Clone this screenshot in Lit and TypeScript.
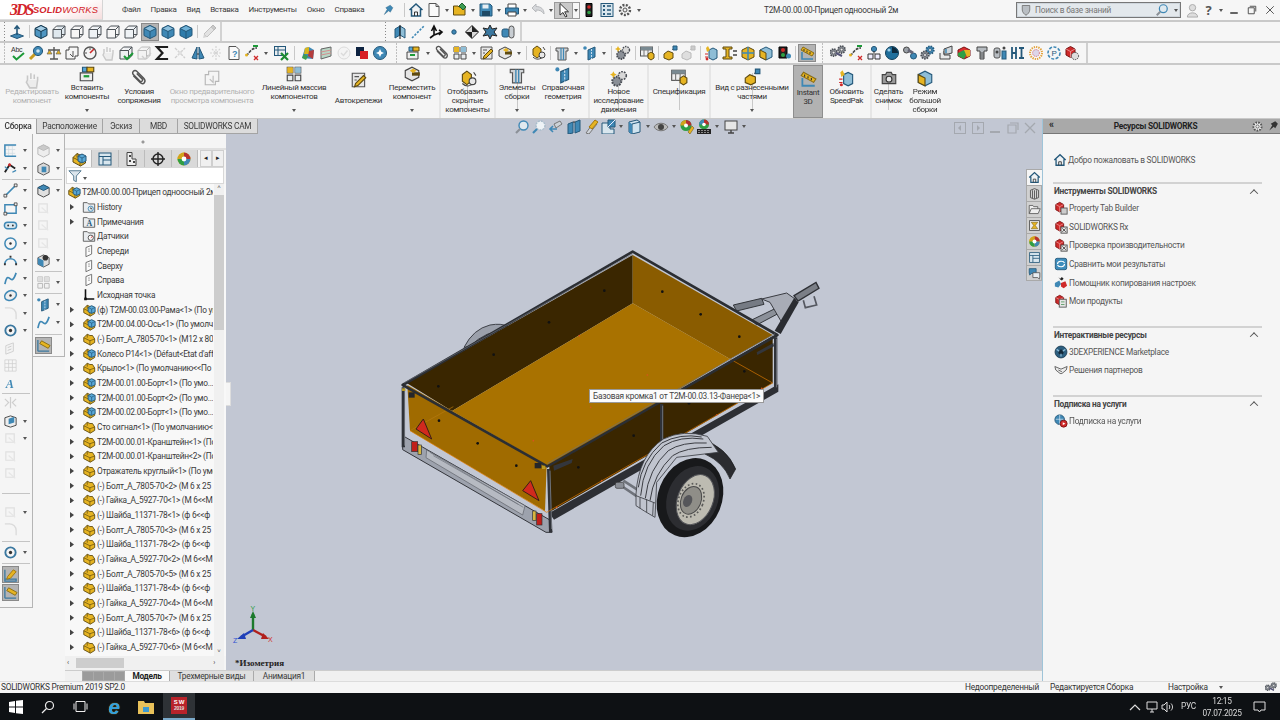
import { LitElement, html, css, svg } from 'lit';
import { customElement } from 'lit/decorators.js';

const B = '#3f88b5', BD = '#24587a', Y = '#e6b422', YD = '#5e4a10', G = '#8b9097', GD = '#4a4e55', R = '#cf2a2a';

const cube = (f = B, t = '#8cc0de', s = BD) => svg`<path d="M8 1.5 14 4.5V11.5L8 14.5 2 11.5V4.5Z" fill=${f} stroke=${s}/><path d="M2 4.5 8 1.5 14 4.5 8 7.5Z" fill=${t} stroke=${s}/><path d="M8 7.5V14.5" stroke=${s}/>`;
const wire = (f = 'none') => svg`<path d="M2 5.5H10.5V14H2ZM5.5 2H14V10.5H10.5M2 5.5 5.5 2M10.5 5.5 14 2M10.5 14 14 10.5" fill=${f} stroke="#4d5358"/>`;
const part = svg`<path d="M2 6.5 6 2.5 9 4 12 4 14.5 8V12L9.5 15 2 11Z" fill=${Y} stroke=${YD}/><path d="M2 6.5 9 10V15M9 10 14.5 8M6 2.5 6 6.5" fill="none" stroke=${YD} stroke-width=".8"/>`;
const asm = svg`${part}<path d="M7 5 11 3 15 5V10L11 12 7 10Z" fill="#58a7d6" stroke=${BD}/><path d="M7 5 11 7 15 5M11 7V12" fill="none" stroke=${BD} stroke-width=".8"/>`;
const folder = (x: unknown = '') => svg`<path d="M1.5 3H6L7.5 4.5H14.5V14H1.5Z" fill="#e9ecef" stroke="#555"/>${x}`;
const plane = svg`<path d="M4.5 4 11 1.5V11.5L4.5 14.5Z" fill="#fbfbfb" stroke="#666"/><path d="M8 5V9" stroke="#666" stroke-dasharray="1.5 1"/>`;
const page = svg`<path d="M3 1.5H10L13 4.5V14.5H3Z" fill="#fafafa" stroke="#555"/>`;
const gear = (c = G, s = GD) => svg`<circle cx="8" cy="8" r="5" fill=${c} stroke=${s} stroke-width="2.4" stroke-dasharray="2 1.4"/><circle cx="8" cy="8" r="2" fill="#eee" stroke=${s}/>`;
const redbox = svg`<path d="M2 4 6.5 1.5 11 4V10L6.5 12.5 2 10Z" fill=${R} stroke="#7a1212"/><path d="M2 4 6.5 6.5 11 4M6.5 6.5V12.5" fill="none" stroke="#f2b5b5" stroke-width=".7"/>`;

const ICONS: Record<string, unknown> = {
  normal: svg`<path d="M1.5 12 8 9.5 14.5 12 8 14.5Z" fill=${B} stroke=${BD}/><path d="M8 11V2M5.5 5 8 2 10.5 5" fill="none" stroke=${BD} stroke-width="1.6"/>`,
  cube: cube(), cubeE: cube('#4f96c2', '#a4cde5', '#14384f'), cube2: cube('#2f7cab', '#6fb2d8', BD),
  wire1: wire('#dfe8ee'), wire2: wire(), wire3: wire('#eef2f5'),
  flash: svg`<path d="M3 10 10 3 13 6 6 13Z" fill="#bcc0c4" stroke="#5d6166"/><path d="M10 3 12 1 15 4 13 6" fill="#777" stroke="#444"/><path d="M3 10 2 14 6 13" fill="#999"/>`,
  planeB: svg`<path d="M3 5 8 2V11L3 14Z" fill=${B} stroke=${BD}/><path d="M8 2 13 5V14L8 11Z" fill="#8ebdd6" stroke=${BD}/><path d="M8 1V15" stroke="#111"/>`,
  axis: svg`<path d="M2 14 14 2" stroke=${B} stroke-width="1.6" stroke-dasharray="2.2 1.4"/>`,
  triad: svg`<path d="M6 2V11L14 8M6 11 2 14M3.5 7 6 2 8.5 7M11 6l3 2-3 3" fill="none" stroke="#111" stroke-width="1.6"/>`,
  dot: svg`<circle cx="8" cy="8" r="2.2" fill=${B} stroke=${BD}/>`,
  diamond: svg`<path d="M8 1.5 14.5 8 8 14.5 1.5 8Z" fill="#d9d9d9" stroke="#222"/><path d="M8 1.5V8H1.5L8 14.5V8H14.5Z" fill="#222"/>`,
  spark: svg`<path d="M8 1 10 5 15 4 12 8 15 12 10 11 8 15 6 11 1 12 4 8 1 4 6 5Z" fill="#3b78a0" stroke="#222"/>`,
  cyls: svg`<rect x="2" y="5" width="7" height="8" rx="2" fill=${B} stroke=${BD}/><rect x="9" y="2" width="5" height="12" rx="2.5" fill="#c8cdd2" stroke="#555"/>`,
  abc: svg`<text x="1" y="7" font-size="7" font-family="Liberation Sans" fill="#333">Abc</text><path d="M3 11 6.5 14.5 14 8" fill="none" stroke="#1d9a38" stroke-width="2"/>`,
  probe: svg`<path d="M2 14 7 9" stroke="#c89b20" stroke-width="3"/><circle cx="10" cy="6" r="4.6" fill=${B} stroke=${BD}/><circle cx="10" cy="6" r="1.8" fill="#cfe4f0"/>`,
  scale: svg`<path d="M8 2V14M4 14H12M2 5H14" stroke="#555" stroke-width="1.4"/><path d="M1 9H6L3.5 5ZM10 9H15L12.5 5Z" fill=${Y} stroke="#555" stroke-width=".6"/>`,
  docs: svg`<path d="M5 2H14V11H11V14H2V5H5Z" fill="#f5f5f5" stroke="#444"/><path d="M6 9 9 12V6" stroke="#555" fill="none"/>`,
  gauge: svg`<circle cx="8" cy="8" r="6" fill="#f3f3f3" stroke="#555" stroke-width="1.4"/><path d="M8 8 12 4" stroke=${R} stroke-width="1.6"/><path d="M3 8H5M8 3V5" stroke="#555"/>`,
  hand: svg`<path d="M4 8V4M7 7V2M10 7V3M13 8V5M4 8 3 10 6 15H12L13 8" fill="#ddd" stroke="#777" stroke-width="1.4"/>`,
  shieldok: svg`${wire('#eef0f2')}<path d="M6 11 9 14 15 8" fill="none" stroke="#1d9a38" stroke-width="2"/>`,
  shield: svg`${wire('#eef0f2')}<path d="M6 11 9 14 15 8" fill="none" stroke="#888" stroke-width="1.4"/>`,
  sigma: svg`<path d="M13 3V2H3L8.5 8 3 14H13V13" fill="none" stroke="#1e1e1e" stroke-width="2.2"/>`,
  dims: svg`<path d="M3 3 13 13M3 13 13 3" stroke="#888" stroke-width="1.4" stroke-dasharray="3 1"/><circle cx="8" cy="8" r="2" fill="#bbb"/>`,
  book: svg`<path d="M2 13 7 2V14ZM9 2 14 13 9 14Z" fill=${B} stroke=${BD}/><path d="M7 9H9" stroke="#333"/>`,
  freeze: svg`<path d="M8 1V15M2 8H14M4 4 12 12M12 4 4 12" stroke="#999" stroke-width="1.2" stroke-dasharray="2 1"/>`,
  docq: svg`${page}<text x="6" y="12" font-size="9" font-weight="700" font-family="Liberation Sans" fill=${B}>?</text>`,
  curve: svg`<path d="M2 10C5 10 6 3 13 3" fill="none" stroke="#444" stroke-width="1.6" stroke-dasharray="3 1"/><circle cx="2.5" cy="10" r="1.5" fill=${Y}/><path d="M10 11 14 15M14 11 10 15" stroke=${R} stroke-width="1.3"/><path d="M9 1 14 1" stroke="#1d9a38" stroke-width="2"/>`,
  tablex: svg`<rect x="1.5" y="1.5" width="11" height="9" fill="#e9edf0" stroke="#24587a"/><path d="M1.5 5H12.5M5 1.5V10.5" stroke="#24587a"/><path d="M8 8 15 15M15 8 8 15" stroke="#1d8a32" stroke-width="2.2"/>`,
  color: svg`<path d="M2 13 5 3 9 2 14 5 13 14Z" fill=${B}/><path d="M5 3 9 2 9 9 4 9Z" fill="#d7b51e"/><path d="M9 6 14 5 13 14 8 11Z" fill="#b33b3b"/><path d="M2 13 4 9 8 11 6 15Z" fill="#3e9c50"/>`,
  layers: svg`<path d="M3 4 13 2V11L3 14Z" fill="#b8d5c4" stroke="#666"/><path d="M3 7 13 5M3 10 13 8" stroke="#d38f8f"/>`,
  check: svg`<circle cx="8" cy="8" r="6" fill="#f1f1f1" stroke="#aaa"/><path d="M5 8 7.5 10.5 11.5 5.5" fill="none" stroke="#aaa" stroke-width="1.4"/>`,
  redsq: svg`<rect x="2" y="2" width="8" height="9" fill="#0d2240"/><rect x="6" y="6" width="8" height="8" fill="#d81f26"/>`,
  sprock: svg`<circle cx="8" cy="8" r="6.5" fill=${B} stroke=${BD}/><path d="M8 4 9.3 6.7 12 8 9.3 9.3 8 12 6.7 9.3 4 8 6.7 6.7Z" fill="#fff"/>`,
  insert: svg`<path d="M2 7H13V14H2Z" fill="#eee" stroke="#444"/><path d="M4 6V2H8V6Z" fill="#58a7d6" stroke=${BD}/><path d="M8 6V2H14V6Z" fill=${Y} stroke=${YD}/><path d="M5 10H10" stroke="#1d9a38" stroke-width="2"/>`,
  clip: svg`<path d="M3 6 9 12C12 15 15 11 12 8L6 2C4 0 1 3 3 5L9 11C10 12 12 10 11 9L6 4" fill="none" stroke="#555" stroke-width="1.3"/>`,
  pattern: svg`<path d="M2 2H7V7H2ZM9 2H14V7H9ZM2 9H7V14H2ZM9 9H14V14H9Z" fill="#e9edf0" stroke="#444"/><path d="M2 2H7V7H2Z" fill=${Y}/><path d="M9 2H14V7H9Z" fill="#8ebdd6"/>`,
  fast: svg`<path d="M2 2H13V14H2Z" fill="#e6e6e6" stroke="#555"/><path d="M5 11 12 4 14 6 7 13 4 14Z" fill=${Y} stroke=${YD}/><path d="M4 5H8M4 8H6" stroke="#555"/>`,
  move: svg`<path d="M2 5 8 2 14 5V11L8 14 2 11Z" fill="#e5e5e5" stroke="#444"/><path d="M8 8H15" stroke=${YD} stroke-width="3"/><path d="M6 5 9 3 12 5 9 7Z" fill=${Y}/>`,
  show: svg`<path d="M3 4 7 1 11 4V10L7 13 3 10Z" fill=${Y} stroke=${YD}/><path d="M3 12C6 15 10 15 14 11" fill="none" stroke="#444"/><circle cx="12" cy="10" r="3" fill="#e8e8e8" stroke="#444"/><path d="M13 2 15 5" stroke="#444"/>`,
  elem: svg`<path d="M2 3H14V6H12V15H4V6H2Z" fill="#cfd3d6" stroke="#555"/><path d="M7 3V15M9.5 3V15" stroke=${B} stroke-width="1.2"/>`,
  geom: svg`<path d="M6 5 13 2V12L6 15Z" fill=${B} stroke=${BD}/><path d="M9.5 4V14" stroke="#cde" stroke-dasharray="2 1"/><circle cx="3" cy="3" r="1.8" fill=${B}/>`,
  motion: svg`<circle cx="6" cy="10" r="4" fill=${G} stroke=${GD} stroke-width="1.8" stroke-dasharray="1.5 1"/><circle cx="11" cy="5" r="3.5" fill="#d8d8d8" stroke=${GD} stroke-width="1.4" stroke-dasharray="1.5 1"/><path d="M3 1 4 3 6 4 4 5 3 7 2 5 0 4 2 3Z" fill=${Y}/>`,
  bom: svg`<rect x="1.5" y="2" width="12" height="9" fill="#f0f0f0" stroke="#555"/><path d="M1.5 5H13.5M5 5V11M9 5V11" stroke="#777"/><rect x="1.5" y="2" width="12" height="3" fill="#7a8a92"/><path d="M9 9 12 7 15 9V13L12 15 9 13Z" fill=${Y} stroke=${YD}/>`,
  expl: svg`<path d="M2 9 6 6 11 8V13L7 15 2 13Z" fill=${Y} stroke=${YD}/><path d="M10 5 12 3" stroke="#444" stroke-dasharray="1 1"/><path d="M11 1H15V5H11Z" fill=${B} stroke=${BD}/>`,
  load: svg`<path d="M5 5 9 3 13 5V13L9 15 5 13Z" fill="#8ebdd6" stroke=${BD}/><path d="M2 3 4 1 6 5 3 7Z" fill=${Y}/><path d="M1 9H4M1 12H4" stroke=${R}/><circle cx="3" cy="14" r="1.4" fill=${R}/>`,
  ibeam: svg`<path d="M1 2H10V4H7V12H10V14H1V12H4V4H1Z" fill=${Y} stroke=${YD}/><path d="M11 6H15M11 10H15" stroke="#444" stroke-width="1.4"/>`,
  ycube: svg`<path d="M2 5 8 2 14 5V12L8 15 2 12Z" fill=${Y} stroke=${YD}/><path d="M8 2V15M2 8 14 8" stroke=${B} stroke-width="1.5"/>`,
  ybcube: svg`<path d="M2 5 8 2 14 5V12L8 15 2 12Z" fill="#8ebdd6" stroke=${BD}/><path d="M2 5 8 8V15L2 12Z" fill=${Y} stroke=${YD}/>`,
  light: svg`<path d="M5 1.5H11V14.5H5Z" fill="#222" stroke="#000"/><circle cx="8" cy="5" r="1.8" fill=${R}/><circle cx="8" cy="10.5" r="1.8" fill="#2fa145"/>`,
  lightB: svg`<path d="M3 2H11V13H3Z" fill="#222" stroke="#000"/><circle cx="7" cy="5" r="2" fill=${R}/><circle cx="7" cy="10" r="2" fill="#2fa145"/><circle cx="12.5" cy="11" r="2.5" fill=${B}/>`,
  inst: svg`<path d="M2 5 4 2 15 8 13 11Z" fill=${Y} stroke="#8a6d14"/><path d="M5 4 5 6M8 5.5 8 7.5M11 7 11 9" stroke="#333"/><path d="M3 7V14H14" fill="none" stroke=${B} stroke-width="1.6"/>`,
  gears2: svg`<g transform="translate(-2 2) scale(.7)">${gear()}</g><g transform="translate(6 -1) scale(.7)">${gear()}</g><path d="M6 8 12 11" stroke="#557" stroke-width="2"/>`,
  nodes: svg`<circle cx="8" cy="4" r="2.6" fill=${B} stroke=${BD}/><path d="M2 9H7V14H2ZM9 9H14V14H9Z" fill="#eef" stroke="#333"/><path d="M8 6V9" stroke="#333"/>`,
  ball: svg`<circle cx="8" cy="8" r="6.5" fill="#1f6f9c" stroke="#123f5a"/><path d="M8 2A6 6 0 0 1 14 8H8Z" fill="#0c2a3e"/><circle cx="5" cy="5" r="1.6" fill="#9fd0ea"/>`,
  rollers: svg`<circle cx="4.5" cy="5" r="3" fill="#9aa0a6" stroke="#444"/><circle cx="11.5" cy="11" r="3" fill=${B} stroke=${BD}/><path d="M6 5 11 8" stroke="#667" stroke-width="3"/>`,
  gearB: svg`<g transform="translate(4 -1) scale(.75)">${gear(B, BD)}</g><g transform="translate(-1 4) scale(.75)">${gear()}</g>`,
  pipe: svg`<path d="M2 8V14H12V10H6V6" fill="#e9e9e9" stroke="#444"/><path d="M6 4 14 1V8L10 9H6Z" fill="#cfd6db" stroke="#444"/><path d="M8 4V8" stroke=${B} stroke-width="1.5"/>`,
  redcube: svg`<path d="M2 5 8 2 14 5V11L8 14 2 11Z" fill="#db2e2e" stroke="#7a1212"/><path d="M2 8 8 5 11 8 8 14 2 11Z" fill="#2f9e44"/><path d="M8 5 14 5V11L11 12Z" fill=${Y}/>`,
  screw: svg`<path d="M3 2H13V6H10V14H6V6H3Z" fill="#b7bcc1" stroke="#444"/><path d="M6 8H10M6 10H10M6 12H10" stroke="#555"/>`,
  bolts: svg`<rect x="2" y="3" width="6" height="10" rx="2" fill="#b7bcc1" stroke="#555"/><circle cx="5" cy="7" r="1.5" fill="#444"/><rect x="10" y="6" width="4" height="8" fill=${B} stroke=${BD}/><circle cx="12" cy="3" r="1.5" fill="#444"/>`,
  kit: svg`<path d="M2 2V14M2 8H6M6 2V14M9 3H14M9 13H14M11.5 3V13" fill="none" stroke="#24587a" stroke-width="1.8"/>`,
  rings: svg`<circle cx="8" cy="8" r="6" fill="none" stroke="#e4a33c" stroke-width="2" stroke-dasharray="1.3 1"/><circle cx="8" cy="8" r="3.4" fill="#dcd6ea" stroke="#c33" stroke-width=".7" stroke-dasharray="1 1"/>`,
  pcirc: svg`<circle cx="8" cy="8" r="6" fill="none" stroke=${B} stroke-width="1.6" stroke-dasharray="3 1.5"/><text x="5.4" y="11" font-size="8" font-family="Liberation Sans" fill=${BD}>P</text>`,
  redgear: svg`${redbox}<circle cx="11" cy="11" r="3.6" fill="#ddd" stroke="#444" stroke-dasharray="1.3 .8"/>`,
  home: svg`<path d="M1.5 8 8 2 14.5 8M3.5 7V14H12.5V7" fill="#eef2f5" stroke=${BD} stroke-width="1.5"/><path d="M6.5 14V10H9.5V14" fill="none" stroke="#333"/>`,
  newdoc: svg`${page}<path d="M10 1.5V4.5H13" fill="none" stroke="#555"/>`,
  open: svg`<path d="M1.5 4H6L7 5H13V13H1.5Z" fill=${Y} stroke=${YD}/><path d="M7 4 10 1 14 5 11 8Z" fill="#3c9b52" stroke="#1e5e2e"/>`,
  save: svg`<path d="M2 2H12L14 4V14H2Z" fill=${B} stroke=${BD}/><rect x="4.5" y="2.5" width="6" height="4" fill="#e6eef3"/><rect x="4" y="9" width="8" height="5" fill="#1f4a66"/>`,
  print: svg`<path d="M4 6V2H12V6" fill="#fff" stroke="#444"/><path d="M1.5 6H14.5V12H1.5Z" fill=${B} stroke=${BD}/><path d="M4 10H12V14H4Z" fill="#fff" stroke="#444"/>`,
  undo: svg`<path d="M2 6 6 2V4.5C11 4.5 14 7 14 12 12 9 10 8 6 8V10Z" fill="#d6d8db" stroke="#b8babd"/>`,
  arrow: svg`<path d="M4 1.5V13L7 10.5 9.5 15 11 14.2 8.7 9.8H12.5Z" fill="#fff" stroke="#333"/>`,
  listico: svg`<rect x="2" y="1.5" width="12" height="13" fill="#d8e6ee" stroke=${BD}/><path d="M8 4H12M8 8H12M8 12H12" stroke=${BD} stroke-width="1.4"/><path d="M4 3H6V5H4ZM4 7H6V9H4ZM4 11H6V13H4Z" fill=${BD}/>`,
  cog: gear('#f2f2f2', '#555'),
  pin: svg`<path d="M5 5 11 1.5 14.5 5 11 11 9 9 3 14 7 7Z" fill=${B} stroke=${BD} stroke-width=".5"/>`,
  pinB: svg`<path d="M5 5 11 1.5 14.5 5 11 11 9 9 3 14 7 7Z" fill="#333"/>`,
  // sketch strip
  skrect: svg`<path d="M2 14V3H13M6 3V14M10 3V14M2 7H13M2 11H13" fill="none" stroke="#cfdbe2" stroke-width=".8"/><path d="M2 14V2H14M2 14H14" fill="none" stroke=${B} stroke-width="1.6"/>`,
  smart: svg`<path d="M2 12 7 4 13 8" fill="none" stroke="#222" stroke-width="2"/><path d="M2 6 5 9M10 12 14 10" stroke=${B} stroke-width="1.4"/><circle cx="7" cy="4" r="1.6" fill=${R}/>`,
  skline: svg`<path d="M2 14 14 2" stroke=${B} stroke-width="1.6"/><path d="M1 12H4V15H1ZM12 1H15V4H12Z" fill="#eee" stroke="#333" stroke-width=".8"/>`,
  sksq: svg`<path d="M2 4H14V13H2Z" fill="none" stroke=${B} stroke-width="1.6"/><path d="M1 12H4V15H1ZM12 2H15V5H12Z" fill="#eee" stroke="#333" stroke-width=".8"/>`,
  skslot: svg`<rect x="1.5" y="4.5" width="13" height="7" rx="3.5" fill="#d8e6ee" stroke=${B} stroke-width="1.6"/><circle cx="5.5" cy="8" r="1" fill="#333"/><circle cx="10.5" cy="8" r="1" fill="#333"/>`,
  skcirc: svg`<circle cx="8" cy="8" r="6" fill="#f6f6f6" stroke=${B} stroke-width="1.6"/><circle cx="8" cy="8" r="1.3" fill="#333"/>`,
  skarc: svg`<path d="M2 12C2 4 14 4 14 12" fill="none" stroke=${B} stroke-width="1.6"/><path d="M1 11H3V13H1ZM13 11H15V13H13ZM7 3H9V5H7Z" fill="#333"/>`,
  skspl: svg`<path d="M2 14C6 -4 8 20 14 2" fill="none" stroke=${B} stroke-width="1.8"/>`,
  skell: svg`<ellipse cx="8" cy="8" rx="6.5" ry="5" transform="rotate(-25 8 8)" fill="#eee" stroke=${B} stroke-width="1.6"/><circle cx="8" cy="8" r="1.3" fill="#333"/>`,
  skfil: svg`<path d="M2 2H7C11 2 14 5 14 9V14" fill="none" stroke="#aaa" stroke-width="1.4"/>`,
  sktar: svg`<circle cx="8" cy="8" r="5.5" fill="none" stroke="#3b78a0" stroke-width="2"/><circle cx="8" cy="8" r="1.8" fill="#333"/>`,
  skpl: svg`<path d="M3 5 11 2V11L3 14Z" fill="#f2f2f2" stroke="#888"/><path d="M5 7 9 5.5M5 10 9 8.5" stroke=${B}/>`,
  skgrid: svg`<path d="M2 2H14V14H2ZM6 2V14M10 2V14M2 6H14M2 10H14" fill="#fafafa" stroke="#888" stroke-width=".8"/>`,
  skA: svg`<text x="3" y="13" font-size="13" font-style="italic" font-weight="700" font-family="Liberation Serif" fill=${B}>A</text>`,
  sktr: svg`<path d="M2 3 6 7 2 11M14 3 10 7 14 11M8 1V13" fill="none" stroke="#888" stroke-width="1.3"/>`,
  skcube: svg`<path d="M2 4 8 2 14 4V12L8 14 2 12Z" fill="#eee" stroke="#444"/><path d="M6 5 12 3V9L6 11Z" fill=${B}/>`,
  skoff: svg`<path d="M3 3H12V12H3Z" fill="none" stroke="#bbb" stroke-width="1.3"/><path d="M6 7 13 13" stroke="#ccc" stroke-width="1.4"/>`,
  skfast: svg`<path d="M2 13H14V15H2ZM2 3V13" fill="none" stroke="#3b78a0" stroke-width="1.4"/><path d="M5 10 11 3 14 5 8 12 4 13Z" fill=${Y} stroke="#a3760f"/>`,
  skins: svg`<path d="M2 14V2M2 14H14" fill="none" stroke="#3b78a0" stroke-width="1.4"/><path d="M4 6 6 3 15 8 13 11Z" fill=${Y} stroke="#8a6d14"/>`,
  gcube: svg`<path d="M2 5 8 2 14 5V12L8 15 2 12Z" fill="#ddd" stroke="#555"/><circle cx="10" cy="5" r="3" fill="#333"/><path d="M2 5 8 8V15L2 12Z" fill=${B}/>`,
  cubeL: svg`<path d="M2 5 8 2 14 5V12L8 15 2 12Z" fill="#d9d9d9" stroke="#555"/><path d="M6 6H11V12H6Z" fill=${B}/>`,
  cubeB: svg`<path d="M2 5 8 2 14 5V12L8 15 2 12Z" fill="#e0e0e0" stroke="#444"/><path d="M2 5 8 2 14 5 8 8Z" fill=${B} stroke=${BD}/>`,
  // tree
  part, asm,
  hist: folder(svg`<circle cx="10" cy="10" r="3" fill="#dfe9ef" stroke=${B}/><path d="M10 8.5V10H11.5" stroke="#333" fill="none"/>`),
  notes: folder(svg`<text x="5" y="13" font-size="9" font-weight="700" font-family="Liberation Serif" fill=${BD}>A</text>`),
  sens: folder(svg`<circle cx="10" cy="10" r="3" fill="#fff" stroke="#444"/><path d="M10 10 12 8.5" stroke=${R}/>`),
  plane,
  origin: svg`<path d="M4 1.5V12.5H14" fill="none" stroke="#111" stroke-width="1.8"/><path d="M2.5 11H5.5V14H2.5Z" fill="#111"/>`,
  filter: svg`<path d="M1 2H15L9.5 8V14.5L6.5 13V8Z" fill="#dbe5ec" stroke="#466e88"/>`,
  shieldS: svg`<path d="M3 2H13V8C13 11 10 14 8 15 6 14 3 11 3 8Z" fill="#b9bec3" stroke="#666"/>`,
  fm2: svg`<rect x="2" y="2" width="12" height="12" fill="#d8e6ee" stroke=${BD}/><path d="M2 5.5H14M6 5.5V14M6 9H14" stroke=${BD}/>`,
  fm3: svg`<path d="M4 1.5H9V8H13V14.5H4Z" fill="#eee" stroke="#444"/><path d="M6 4H8V6H6ZM6 9H8V11H6ZM10 10H12V12H10Z" fill="#444"/>`,
  fm4: svg`<circle cx="8" cy="8" r="5" fill="none" stroke="#222" stroke-width="1.4"/><path d="M8 1V15M1 8H15" stroke="#222" stroke-width="1.4"/>`,
  wheel: svg`<circle cx="8" cy="8" r="6.5" fill="#e2be22"/><path d="M8 8V1.5A6.5 6.5 0 0 1 14.5 8Z" fill="#b5302f"/><path d="M8 8H1.5A6.5 6.5 0 0 1 8 1.5Z" fill="#d2a31c"/><path d="M8 8V14.5A6.5 6.5 0 0 1 1.5 8Z" fill="#2f9e44"/><path d="M8 8H14.5A6.5 6.5 0 0 1 8 14.5Z" fill=${B}/><circle cx="8" cy="8" r="2.4" fill="#fff"/>`,
  wheelP: svg`<circle cx="7" cy="6.5" r="5.5" fill="#2f9e44"/><path d="M7 6.5V1A5.5 5.5 0 0 1 12.5 6.5Z" fill="#b5302f"/><path d="M7 6.5H1.5A5.5 5.5 0 0 1 7 1Z" fill="#d2a31c"/><circle cx="7" cy="6.5" r="2" fill="#fff"/><path d="M9 13 13 7 15 9 11 15Z" fill=${Y} stroke=${YD} stroke-width=".5"/>`,
  wheelF: svg`<circle cx="8" cy="5.5" r="5" fill="#2f9e44"/><path d="M8 5.5V.5A5 5 0 0 1 13 5.5Z" fill="#b5302f"/><path d="M8 5.5H3A5 5 0 0 1 8 .5Z" fill=${B}/><circle cx="8" cy="5.5" r="1.8" fill="#fff"/><path d="M1 10H15V15H1Z" fill="#222"/><path d="M3 11V14M6 11V14M9 11V14M12 11V14" stroke="#eee" stroke-dasharray="1 1"/>`,
  search: svg`<circle cx="9.5" cy="6.5" r="4.5" fill="#dfe9ef" stroke=${B} stroke-width="1.4"/><path d="M6 10 2 14" stroke=${G} stroke-width="2.2"/>`,
  zoomA: svg`<circle cx="9.5" cy="6.5" r="4.5" fill="#eef3f6" stroke="#a9bccb" stroke-width="1.4" stroke-dasharray="2 1"/><path d="M6 10 2 14" stroke=${B} stroke-width="2.2"/>`,
  prevV: svg`<path d="M6 5 12 2 14 5 8 9Z" fill="#ccd2d8" stroke="#777"/><path d="M2 10H9M5 7 2 10 5 13" fill="none" stroke=${B} stroke-width="1.6"/>`,
  sect: svg`<path d="M2 5 7 3V14L2 15ZM9 3 14 1V12L9 14Z" fill=${B} stroke=${BD}/><path d="M7 3 9 3" stroke="#333"/>`,
  dyn: svg`<path d="M3 14 11 3 14 5 6 15Z" fill="#d0d4da" stroke="#777"/><path d="M6 8 12 1 15 3 9 10Z" fill=${Y} stroke="#a3760f"/>`,
  viewO: svg`<path d="M2 4H10V10H14V15H2Z" fill="#d8e6ee" stroke=${BD}/><path d="M8 1H15V8H8Z" fill=${B} stroke=${BD}/><path d="M8 8 15 1" stroke="#eef"/>`,
  cubeV: svg`<path d="M3 3 11 1 14 3V13L6 15 3 13Z" fill="#cfe3ef" stroke=${BD}/><path d="M6 5V15M6 5 14 3" stroke=${BD}/><path d="M3 3 6 5V15L3 13Z" fill=${B}/>`,
  eye: svg`<path d="M1 8C4 3 12 3 15 8 12 13 4 13 1 8Z" fill="#bbb" stroke="#777"/><circle cx="8" cy="8" r="3" fill="#444"/>`,
  monitor: svg`<rect x="2" y="2" width="12" height="9" fill="#e6e6e6" stroke="#444"/><path d="M8 11V14M5 14H11" stroke="#444" stroke-width="1.4"/>`,
  mini1: svg`<rect x="2.5" y="2.5" width="11" height="11" fill="none" stroke="#a4a8af"/><path d="M9 5 6 8 9 11Z" fill="#a4a8af"/>`,
  mini2: svg`<rect x="2.5" y="2.5" width="11" height="11" fill="none" stroke="#a4a8af"/><path d="M7 5 10 8 7 11Z" fill="#a4a8af"/>`,
  minim: svg`<path d="M3 12H13" stroke="#a4a8af" stroke-width="2"/>`,
  rest: svg`<path d="M5 3H13V10M3 5H11V13H3Z" fill="none" stroke="#a4a8af" stroke-width="1.2"/>`,
  close: svg`<path d="M3 3 13 13M13 3 3 13" stroke="#a4a8af" stroke-width="1.3"/>`,
  minD: svg`<path d="M3 12H13" stroke="#333" stroke-width="2"/>`,
  restD: svg`<path d="M5 3H13V10M3 5H11V13H3Z" fill="none" stroke="#444" stroke-width="1.2"/>`,
  closeD: svg`<path d="M3 3 13 13M13 3 3 13" stroke="#555" stroke-width="1.3"/>`,
  user: svg`<circle cx="8" cy="5" r="3.4" fill="#ddd" stroke="#aaa"/><path d="M2.5 15C2.5 9 13.5 9 13.5 15Z" fill="#ddd" stroke="#aaa"/>`,
  tabBox: svg`<path d="M3 4 8 2 13 4V13L8 15 3 13Z" fill="#d4d4d4" stroke="#444"/><path d="M5.5 4V13.5M8 4V14.5M10.5 4V13.5" stroke="#444"/>`,
  tabOpen: svg`<path d="M1.5 13V3H6L7 4.5H12V7M1.5 13 4 7H15L12.5 13Z" fill="#eee" stroke="#555"/>`,
  tabPic: svg`<rect x="2" y="2" width="12" height="12" fill="#eee" stroke="#444"/><path d="M4 4H12L9 8 12 12H4L7 8Z" fill=${Y} stroke=${YD} stroke-width=".6"/>`,
  tabChat: svg`<path d="M1.5 2H10V8H4L2 10V8H1.5Z" fill=${B} stroke=${BD}/><path d="M6 7H14.5V13H14V15L12 13H6Z" fill="#e8eef2" stroke="#555"/>`,
  camera: svg`<path d="M2 5H5L6 3H10L11 5H14V13H2Z" fill="#9a9a9a" stroke="#444"/><circle cx="8" cy="9" r="2.6" fill="#e9e9e9" stroke="#333"/>`,
  resProp: svg`${redbox}<rect x="8" y="8" width="7" height="7" fill="#ccc" stroke="#555"/>`,
  resRx: svg`${redbox}<rect x="8" y="8" width="7" height="7" fill="#e5e5e5" stroke="#444"/><path d="M9.5 9.5 13.5 13.5M13.5 9.5 9.5 13.5" stroke="#444"/>`,
  resCmp: svg`<rect x="1.5" y="1.5" width="13" height="13" rx="2" fill="#3d8dbc" stroke=${BD}/><path d="M4 8C4 4 11 4 12 7M12 8C12 12 5 12 4 9" fill="none" stroke="#fff" stroke-width="1.3"/>`,
  resCopy: svg`<path d="M1 8 6 5 8 9 5 13 1 12Z" fill=${B}/><path d="M8 8 13 6 15 11 11 14 8 12Z" fill=${R}/><path d="M5 1 7 3 9 1 11 3 9 5 7 4Z" fill="#222"/>`,
  resProd: svg`${redbox}<rect x="6" y="6" width="8" height="9" fill="#e6e6e6" stroke="#555"/><path d="M8 9H12M8 12H12" stroke="#5a9a63"/>`,
  res3d: svg`<circle cx="8" cy="8" r="6.8" fill="#2d5f80" stroke="#1b3c52"/><circle cx="8" cy="8" r="3" fill="#13293a"/><path d="M3 5 6 7M13 5 10 7M8 13V10" stroke="#87b9d6" stroke-width="1.4"/>`,
  resHand: svg`<path d="M1 4 8 7 15 4 14 8 9 12 7 12 2 8Z" fill="#ececec" stroke="#555"/><path d="M5 8 9 10" stroke="#555"/>`,
  resSub: svg`<circle cx="6.5" cy="6.5" r="5.5" fill=${B} stroke=${BD}/><path d="M2 6H11M6.5 1V12" stroke="#d5e7f2" stroke-width=".8"/><circle cx="11" cy="11" r="4" fill=${R} stroke="#7a1212"/><path d="M10 9.5 13 11 10 12.5Z" fill="#fff"/>`,
};

const ic = (name: string, size = 16, cls = '') =>
  html`<svg class="ic ${cls}" width=${size} height=${size} viewBox="0 0 16 16">${ICONS[name]}</svg>`;

// toolbar strings: name, name! (disabled), name* (pressed), v dropdown, | separator, _n spacer, h grip
const bar = (s: string) =>
  s.trim().split(/\s+/).map((t) => {
    const m = t.match(/^([v|_h])(\d+)?$/);
    if (m) {
      const w = m[2] ? `width:${m[2]}px` : '';
      if (m[1] === 'v') return html`<i class="dd" style=${w}></i>`;
      if (m[1] === '|') return html`<i class="sep" style=${w}></i>`;
      if (m[1] === 'h') return html`<i class="grip" style=${w}></i>`;
      return html`<i class="sp" style=${w}></i>`;
    }
    const off = t.endsWith('!'), on = t.endsWith('*');
    const n = off || on ? t.slice(0, -1) : t;
    return html`<span class="cell ${on ? 'on' : ''}">${ic(n, 16, off ? 'off' : '')}</span>`;
  });

const MENU = ['Файл', 'Правка', 'Вид', 'Вставка', 'Инструменты', 'Окно', 'Справка'];

const RIBBON = [
  { w: 64, i: 'hand', cy: 80, y: 91, t: ['Редактировать', 'компонент'], off: 1 },
  { w: 46, i: 'insert', cy: 74, y: 87, t: ['Вставить', 'компоненты'], dd: 1 },
  { w: 58, i: 'clip', cy: 78, y: 91, t: ['Условия', 'сопряжения'] },
  { w: 88, i: 'docs', cy: 78, y: 91, t: ['Окно предварительного', 'просмотра компонента'], off: 1 },
  { w: 76, i: 'pattern', cy: 74, y: 87, t: ['Линейный массив', 'компонентов'], dd: 1 },
  { w: 53, i: 'fast', cy: 80, y: 100, t: ['Автокрепежи'] },
  { w: 54, i: 'move', cy: 74, y: 87, t: ['Переместить', 'компонент'], dd: 1 },
  { w: 55, i: 'show', cy: 79, y: 91, t: ['Отобразить', 'скрытые', 'компоненты'], sep: 1 },
  { w: 44, i: 'elem', cy: 75, y: 87, t: ['Элементы', 'сборки'], dd: 1, sep: 1 },
  { w: 50, i: 'geom', cy: 75, y: 87, t: ['Справочная', 'геометрия'], dd: 1 },
  { w: 59, i: 'motion', cy: 79, y: 91, t: ['Новое', 'исследование', 'движения'], sep: 1 },
  { w: 62, i: 'bom', cy: 77, y: 91, t: ['Спецификация'], sep: 1 },
  { w: 84, i: 'expl', cy: 77, y: 87, t: ['Вид с разнесенными', 'частями'], dd: 1, sep: 1 },
  { w: 30, i: 'inst', cy: 78, y: 91, t: ['Instant', '3D'], sel: 1 },
  { w: 47, i: 'load', cy: 78, y: 91, t: ['Обновить', 'SpeedPak'] },
  { w: 35, i: 'camera', cy: 78, y: 91, t: ['Сделать', 'снимок'], sep: 1 },
  { w: 40, i: 'ybcube', cy: 78, y: 91, t: ['Режим', 'большой', 'сборки'] },
];

const TABS = ['Сборка', 'Расположение', 'Эскиз', 'MBD', 'SOLIDWORKS CAM'];
const TAB_W = [37, 66, 37, 38, 80];

type StripItem = [string, number?];
const STRIP1: (StripItem | number)[] = [
  ['skrect', 1], ['smart', 1], 5, ['skline', 1], ['sksq', 1], ['skslot', 1], ['skcirc', 1], ['skarc', 1], ['skspl', 1], ['skell', 1], ['skfil!', 1],
  ['sktar', 1], ['skpl!'], ['skgrid!'], ['skA'], 3, ['sktr!'], ['skcube', 1], ['skoff!', 1], ['skoff!'], ['skoff!'], 21, ['skoff!', 1], ['skfil!'], 5, ['sktar', 1], 5, ['skfast*'], ['skins*'],
];
const STRIP2: (StripItem | number)[] = [
  ['cubeB!', 1], ['cubeL', 1], 5, ['cubeB', 1], ['skoff!'], ['skoff!'], ['skoff!'], ['gcube', 1], 4, ['pattern!', 1], 5, ['geom', 1], ['skspl', 1], 6, ['skins*'],
];

const TREE: [string, string, number][] = [
  ['asm', 'T2M-00.00.00-Прицеп одноосный 2м', 2],
  ['hist', 'History', 1], ['notes', 'Примечания', 1], ['sens', 'Датчики', 0], ['plane', 'Спереди', 0], ['plane', 'Сверху', 0], ['plane', 'Справа', 0], ['origin', 'Исходная точка', 0],
  ['asm', '(ф) T2M-00.03.00-Рама<1> (По умолчанию', 1], ['asm', 'T2M-00.04.00-Ось<1> (По умолчанию', 1], ['part', '(-) Болт_А_7805-70<1> (M12 x 80', 1],
  ['asm', "Колесо P14<1> (Défaut<Etat d'affichage", 1], ['part', 'Крыло<1> (По умолчанию<<По', 1],
  ['asm', 'T2M-00.01.00-Борт<1> (По умо...', 1], ['asm', 'T2M-00.01.00-Борт<2> (По умо...', 1], ['asm', 'T2M-00.02.00-Борт<1> (По умо...', 1],
  ['part', 'Сто сигнал<1> (По умолчанию<<', 1], ['part', 'T2M-00.00.01-Кранштейн<1> (По', 1], ['part', 'T2M-00.00.01-Кранштейн<2> (По', 1], ['part', 'Отражатель круглый<1> (По умолч', 1],
  ['part', '(-) Болт_А_7805-70<2> (M 6 x 25', 1], ['part', '(-) Гайка_А_5927-70<1> (M 6<<M', 1], ['part', '(-) Шайба_11371-78<1> (ф 6<<ф', 1],
  ['part', '(-) Болт_А_7805-70<3> (M 6 x 25', 1], ['part', '(-) Шайба_11371-78<2> (ф 6<<ф', 1], ['part', '(-) Гайка_А_5927-70<2> (M 6<<M', 1],
  ['part', '(-) Болт_А_7805-70<5> (M 6 x 25', 1], ['part', '(-) Шайба_11371-78<4> (ф 6<<ф', 1], ['part', '(-) Гайка_А_5927-70<4> (M 6<<M', 1],
  ['part', '(-) Болт_А_7805-70<7> (M 6 x 25', 1], ['part', '(-) Шайба_11371-78<6> (ф 6<<ф', 1], ['part', '(-) Гайка_А_5927-70<6> (M 6<<M', 1],
];

const SECTIONS = [
  { title: 'Инструменты SOLIDWORKS', gap: 0, items: [['resProp', 'Property Tab Builder'], ['resRx', 'SOLIDWORKS Rx'], ['resRx', 'Проверка производительности'], ['resCmp', 'Сравнить мои результаты'], ['resCopy', 'Помощник копирования настроек'], ['resProd', 'Мои продукты']] },
  { title: 'Интерактивные ресурсы', gap: 15, items: [['res3d', '3DEXPERIENCE Marketplace'], ['resHand', 'Решения партнеров']] },
  { title: 'Подписка на услуги', gap: 15, items: [['resSub', 'Подписка на услуги']] },
];

const BOLTS = [[643, 155], [477, 250], [311, 347], [145, 442], [817, 158], [932, 226], [1048, 293], [1063, 397], [897, 493], [731, 590], [565, 685], [147, 545], [263, 613], [379, 680]];
const ORANGE = [[568, 290], [772, 408], [602, 505], [430, 605], [500, 805], [635, 725], [808, 625], [980, 528], [1115, 448]];

// trailer drawn in 3x coordinates of the 440x310 model area
const trailer = html`<svg class="model" width="440" height="310" viewBox="0 0 1320 930">
  <path d="M222 325Q250 270 300 258 335 252 352 262L345 278Q290 272 240 322Z" fill="#9ba0ab" stroke="#3f4249" stroke-width="3"/>
  <path d="M1030 198 1115 178 1122 196 1040 216Z" fill="#767b84" stroke="#33363b" stroke-width="3"/>
  <path d="M1085 243 1190 192 1198 206 1100 258Z" fill="#8b9099" stroke="#33363b" stroke-width="3"/>
  <path d="M1115 180 1190 162 1218 182 1175 250 1140 190Z" fill="#a8acb6" stroke="#3a3c42" stroke-width="3"/>
  <path d="M1226 190 1172 285 1154 275 1212 178Z" fill="#2a2c31"/>
  <path d="M1212 170 1278 130 1287 148 1224 186Z" fill="#7b7f87" stroke="#2e3035" stroke-width="4"/>
  <path d="M1240 184 1246 206 1280 198 1272 172" fill="none" stroke="#555860" stroke-width="5"/>
  <path d="M38 590 478 842 486 880 468 880 38 632Z" fill="#9da2ad" stroke="#34363c" stroke-width="3"/>
  <path d="M110 633 405 800 398 828 108 656Z" fill="#b6bac2" stroke="#5c5f66" stroke-width="2"/>
  <path d="M130 650 385 796M120 640 400 805" stroke="#6b6f78" stroke-width="2"/>
  <path d="M478 822 1165 436 1165 458 1070 512 492 842Z" fill="#2d2f34"/>
  <path d="M700 725 770 770M690 738 760 785" stroke="#6f737b" stroke-width="8"/>
  <rect x="676" y="730" width="26" height="18" rx="5" fill="#8a8e96" stroke="#333" stroke-width="2"/>
  <path d="M728 48 50 432 186 516 728 193Z" fill="#3a2600"/>
  <path d="M728 48 1148 288 1020 360 728 193Z" fill="#8a5c00"/>
  <path d="M728 193 1020 360 478 684 186 516Z" fill="#a97200"/>
  <path d="M52 438 470 680 465 816 60 575Z" fill="#a06b00"/>
  <path d="M478 680 1148 292 1148 432 478 820Z" fill="#3a2600"/>
  <path d="M60 575 190 503" stroke="#b87a10" stroke-width="2"/>
  <path d="M1020 360 1148 432" stroke="#e07a00" stroke-width="2"/>
  <path d="M38 438 728 38 1162 288 472 682Z" fill="none" stroke="#2b2e33" stroke-width="8" stroke-linejoin="round"/>
  <path d="M42 432 728 45M472 674 1155 284" fill="none" stroke="#6b7079" stroke-width="2"/>
  <path d="M40 445V625M476 690 482 880M1157 295V448M815 495V625" stroke="#2f3238" stroke-width="10"/>
  <path d="M44 445V620M480 695 485 870M1160 300V445M818 500V620" stroke="#8e929a" stroke-width="2"/>
  <path d="M1100 340 1150 312 1152 322 1102 348ZM490 680 548 660 545 672 492 695Z" fill="#33363c"/>
  <rect x="36" y="448" width="10" height="8" fill="#b99a22"/><rect x="56" y="460" width="18" height="16" fill="#24262a"/>
  <rect x="434" y="672" width="20" height="16" fill="#24262a"/><rect x="456" y="680" width="10" height="10" fill="#b99a22"/>
  <path d="M100 540 78 570 125 600Z" fill="#d12a1e" stroke="#3a2015" stroke-width="3"/>
  <path d="M422 725 398 755 447 785Z" fill="#d12a1e" stroke="#3a2015" stroke-width="3"/>
  <rect x="65" y="608" width="18" height="30" fill="#c01f1a" stroke="#333" stroke-width="2"/><rect x="84" y="618" width="10" height="28" fill="#d6b640" stroke="#333" stroke-width="2"/>
  <rect x="428" y="816" width="10" height="28" fill="#d6b640" stroke="#333" stroke-width="2"/><rect x="440" y="824" width="16" height="34" fill="#c01f1a" stroke="#333" stroke-width="2"/>
  <path d="M60 575 470 820 1148 432" fill="none" stroke="#e07a00" stroke-width="2"/>
  ${BOLTS.map(([x, y]) => svg`<circle cx=${x} cy=${y} r="4" fill="#111"/>`)}
  ${ORANGE.map(([x, y]) => svg`<circle cx=${x} cy=${y} r="2.5" fill="#d9531e"/>`)}
  <path d="M935 600Q1010 625 1037 690L1020 720Q1000 670 945 645Z" fill="#2b2c30" stroke="#18191b" stroke-width="2"/>
  <path d="M738 765Q745 650 820 600 880 570 952 592L985 640 860 655 800 730 795 835Q760 815 738 800Z" fill="#c0c4ce" stroke="#3b3d43" stroke-width="2.5"/>
  <path d="M752 770Q760 672 822 620 870 590 940 600M766 778Q775 690 835 635 875 608 950 612M780 785Q790 705 848 650 885 625 965 625M745 745Q755 665 815 612 870 582 935 594" fill="none" stroke="#3b3d43" stroke-width="3"/>
  <path d="M750 775V808M770 780V820M790 790 788 830M738 770 795 792" stroke="#3b3d43" stroke-width="2.5" fill="none"/>
  <ellipse cx="900" cy="776" rx="96" ry="122" transform="rotate(22 900 776)" fill="#18191b"/>
  <ellipse cx="908" cy="778" rx="76" ry="100" transform="rotate(22 908 778)" fill="#2c2d31"/>
  <ellipse cx="916" cy="782" rx="53" ry="78" transform="rotate(22 916 782)" fill="#bdbbb1" stroke="#55565a" stroke-width="3"/>
  <ellipse cx="903" cy="784" rx="30" ry="43" transform="rotate(22 903 784)" fill="#8f8e88" stroke="#4a4a4a" stroke-width="3"/>
  <ellipse cx="903" cy="784" rx="37" ry="52" transform="rotate(22 903 784)" fill="none" stroke="#5a5a58" stroke-width="5" stroke-dasharray="5 7"/>
  <ellipse cx="893" cy="786" rx="13" ry="19" transform="rotate(22 893 786)" fill="#55565a"/>
</svg>`;

@customElement('app-root')
export class AppRoot extends LitElement {
  static override styles = css`
    :host { display: block; width: 1280px; height: 720px; overflow: hidden; font: 8.3px/1 Roboto, 'Open Sans', sans-serif; letter-spacing: -.25px; color: #3b3b3b; background: #f5f5f5; }
    * { box-sizing: border-box; }
    i { display: block; font-style: normal; flex: none; }
    .ic { display: block; flex: none; stroke-width: 1; }
    .ic.off { opacity: .35; filter: grayscale(1); }
    .app { display: flex; flex-direction: column; width: 1280px; height: 720px; filter: blur(.35px); }

    .cell { display: flex; align-items: center; justify-content: center; width: 18px; height: 18px; flex: none; }
    .cell.on { background: #b4b4b4; box-shadow: inset 0 0 0 1px #8a8a8a; }
    .dd { width: 10px; height: 100%; display: flex; align-items: center; justify-content: center; }
    .dd::after { content: ''; border: 2px solid transparent; border-top: 3px solid #555; border-bottom: 0; }
    .sep { width: 9px; height: 100%; background: linear-gradient(#c8c8c8, #c8c8c8) center / 1px 70% no-repeat; }
    .grip { width: 9px; height: 100%; background: radial-gradient(#888 .6px, transparent .9px) center / 3px 3px repeat-y; }
    .sp { width: 0; }

    .title { display: flex; align-items: center; height: 22px; flex: none; border-bottom: 2px solid #c9c9c9; background: #f6f6f6; position: relative; }
    .logo { display: flex; align-items: center; width: 103px; height: 20px; flex: none; padding-left: 10px; background: linear-gradient(160deg, #fff 55%, #f6dede); border-right: 1px solid #d5d5d5; border-bottom: 1px solid #ddd; color: #d3242b; }
    .logo .ds { font: italic 700 16px/1 'Liberation Serif', serif; letter-spacing: -2px; width: 23px; }
    .logo b { font: italic 700 9.4px/1 'Liberation Sans', sans-serif; letter-spacing: .1px; }
    .logo span { font: italic 400 9.4px/1 'Liberation Sans', sans-serif; letter-spacing: .1px; }
    .menu { display: flex; margin-left: 19px; width: 260px; gap: 10px; white-space: nowrap; font-size: 8px; letter-spacing: -.3px; }
    .title-tools { display: flex; align-items: center; height: 20px; margin-left: 7px; }
    .select { display: flex; height: 17px; border: 1px solid #9a9a9a; background: #c9c9c9; }
    .select .dd { background: #f6f6f6; width: 7px; border-left: 1px solid #9a9a9a; }
    .select .cell { height: 15px; width: 17px; }
    .doc { position: absolute; left: 764px; top: 6px; white-space: nowrap; }
    .search { display: flex; align-items: center; width: 165px; height: 16px; margin-left: auto; border: 1px solid #777; box-shadow: inset 0 0 0 1px #cfd6dc; background: #e3e8ec; padding: 0 0 0 3px; color: #777; gap: 3px; flex: none; }
    .search .q { flex: 1; }
    .win { display: flex; align-items: center; margin: 0 1px 0 4px; flex: none; }
    .win .help { width: 17px; font: 700 13px/1 'Open Sans', sans-serif; color: #555; text-align: center; }

    .tb { display: flex; flex: none; height: 21px; background: #f6f6f6; border-bottom: 2px solid #c9c9c9; }
    .tb .group { display: flex; align-items: center; height: 100%; }
    .r1 .g1 { width: 222px; border-right: 2px solid #d2d2d2; }
    .r1 .g2 { margin-left: 158px; width: 142px; border-right: 2px solid #d2d2d2; }
    .r2 { height: 22px; }
    .r2 .group { width: 1088px; border-right: 2px solid #cfcfcf; }

    .ribbon { display: flex; height: 54px; flex: none; background: #f5f5f5; border-bottom: 1px solid #c9c9c9; }
    .rib { display: flex; flex-direction: column; align-items: center; flex: none; font-size: 8px; letter-spacing: -.3px; line-height: 9px; text-align: center; color: #333; white-space: nowrap; }
    .rib.sep { border-left: 2px solid #e6e6e6; }
    .rib.off { color: #b2b2b2; }
    .rib.sel { background: #b2b2b2; border: 1px solid #8e8e8e; height: 53px; }
    .rib .dd { height: 4px; margin-top: auto; margin-bottom: 6px; }

    .work { display: flex; flex: 1; min-height: 0; }
    .center { flex: 1; display: flex; flex-direction: column; min-width: 0; background: #c2c7d3; }
    .tabsrow { display: flex; align-items: stretch; height: 15px; flex: none; }
    .tab { display: flex; align-items: center; justify-content: center; flex: none; height: 15px; background: #dcdcdc; border-right: 1px solid #a4a4a4; border-bottom: 1px solid #a4a4a4; white-space: nowrap; }
    .tab.on { background: #f5f5f5; border-bottom: 0; font-weight: 500; }
    .hud { display: flex; align-items: center; margin-left: 255px; }
    .hud .cell { width: 17.3px; }
    .hud .dd { width: 9px; }
    .vwin { display: flex; margin-left: 203px; }
    .vwin .cell { width: 17.6px; }

    .body { flex: 1; display: flex; min-height: 0; }
    .left { width: 65px; flex: none; display: flex; background: #f5f5f5; align-items: flex-start; }
    .strip { width: 33px; flex: none; border-right: 1px solid #b5b5b5; border-bottom: 1px solid #b5b5b5; padding-top: 8px; }
    .strip.s2 { width: 32px; height: 223px; }
    .strip.s1 { height: 474px; }
    .si { display: flex; align-items: center; height: 17.5px; padding-left: 3px; }
    .si .dd { height: 4px; margin-left: 4px; width: 6px; }
    .si.on .ic { background: #b4b4b4; outline: 1px solid #8a8a8a; }
    .hline { background: linear-gradient(#c4c4c4, #c4c4c4) center / 100% 1px no-repeat; margin: 0 2px; }
    .mid { flex: 1; display: flex; flex-direction: column; min-width: 0; }
    .midrow { flex: 1; display: flex; min-height: 0; }

    .fm { width: 161px; flex: none; display: flex; flex-direction: column; background: #f5f5f5; position: relative; }
    .fm-head { height: 16px; flex: none; background: radial-gradient(circle at 78px 8px, #999 1.3px, transparent 1.8px); border-bottom: 2px solid #e0e0e0; }
    .fmtabs { display: flex; height: 17px; flex: none; padding-left: 1px; }
    .fmtabs .t { width: 26.5px; display: flex; align-items: center; justify-content: center; background: #d9d9d9; border-right: 1px solid #bcbcbc; }
    .fmtabs .t.on { background: #f7f7f7; width: 26px; }
    .fmtabs .nav { width: 12px; display: flex; align-items: center; justify-content: center; background: #f0f0f0; border: 1px solid #cfcfcf; color: #222; font-size: 7px; }
    .fmtabs .nav.first { margin-left: 2px; }
    .filter { height: 17px; flex: none; margin: 0 2px 0 1px; background: #fff; border: 1px solid #d8d8d8; display: flex; align-items: center; padding-left: 1px; }
    .filter .dd { width: 6px; height: 6px; margin-top: 6px; }
    .tree { flex: 1; position: relative; min-height: 0; overflow: hidden; padding-top: 1px; background: #f8f8f8; }
    .row { display: flex; align-items: center; height: 14.68px; white-space: nowrap; width: 148px; overflow: hidden; }
    .row .ar { width: 4px; height: 6px; margin-left: 5px; margin-right: 8px; flex: none; }
    .row .ar.x { background: #444; clip-path: polygon(0 0, 100% 50%, 0 100%); }
    .row .ic { margin-right: 1px; }
    .row span { flex: 1; min-width: 0; overflow: hidden; line-height: 12px; }
    .row.root .ar { width: 0; margin: 0 0 0 2px; }
    .vs { position: absolute; top: 0; right: 2px; bottom: 0; width: 10px; background: #f0f0f0; display: flex; flex-direction: column; align-items: center; color: #444; font-size: 6px; }
    .vs .th { width: 100%; height: 135px; background: #cdcdcd; margin-top: 5px; }
    .vs .dn { margin-top: auto; margin-bottom: 2px; }
    .hs { height: 14px; flex: none; display: flex; align-items: center; background: #f0f0f0; margin-right: 2px; font-size: 7px; color: #444; padding: 0 9px 0 2px; justify-content: space-between; position: relative; }
    .hs .th { position: absolute; left: 11px; top: 2px; height: 10px; width: 48px; background: #cdcdcd; }

    .view { flex: 1; position: relative; min-width: 0; background: #c2c7d3; overflow: hidden; }
    .model { position: absolute; left: 164px; top: 105px; display: block; }
    .tip { position: absolute; left: 363px; top: 255px; height: 14px; padding: 0 3px; display: flex; align-items: center; background: #fbfbfb; border: 1px solid #999; white-space: nowrap; color: #444; }
    .triad { position: absolute; left: 6px; top: 472px; }
    .iso { position: absolute; left: 9px; top: 525px; font: 700 9px/1 'Liberation Serif', serif; letter-spacing: 0; color: #222; white-space: nowrap; }
    .grab { position: absolute; left: 0; top: 248px; width: 5px; height: 24px; background: #f5f5f5; border: 1px solid #ddd; border-left: 0; }
    .tpt { position: absolute; right: 0; top: 35px; width: 16px; display: flex; flex-direction: column; }
    .tpt span { height: 16px; display: flex; align-items: center; justify-content: center; background: #d0d0d0; border: 1px solid #a9a9a9; border-bottom-width: 0; }
    .tpt span.on { background: #f5f5f5; border-right-width: 0; }
    .tpt span:last-child { border-bottom-width: 1px; }

    .bottom { height: 11px; flex: none; display: flex; background: #f0f0f0; border-top: 1px solid #ccc; }
    .nav4 { margin-left: 17px; width: 43px; display: flex; background: #a9a9a9; gap: 1px; padding: 1px; }
    .nav4 i { flex: 1; background: #9b9b9b; }
    .btab { display: flex; align-items: center; justify-content: center; height: 11px; background: #dfdfdf; border-right: 1px solid #aaa; white-space: nowrap; flex: none; }
    .btab.on { background: #fafafa; font-weight: 700; color: #222; }

    .pane { width: 238px; flex: none; background: #f5f5f5; border-left: 1px solid #9fc4d8; display: flex; flex-direction: column; }
    .phead { height: 15px; flex: none; display: flex; align-items: center; background: #a9a9a9; border-bottom: 1px solid #777; color: #1f1f1f; position: relative; justify-content: center; font-weight: 700; padding-right: 12px; }
    .phead .l { position: absolute; left: 6px; font-size: 10px; line-height: 10px; top: 1px; }
    .phead .r { position: absolute; right: 0; top: 0; display: flex; }
    .pbody { flex: 1; padding: 18px 18px 0 10px; color: #555; }
    .welcome { display: flex; align-items: center; gap: 1px; height: 16px; margin-bottom: 14px; }
    .section { border-top: 2px solid #d2d2d2; }
    .shead { display: flex; justify-content: space-between; align-items: center; height: 15px; padding: 0 5px 0 1px; font-weight: 700; color: #444; }
    .chev { width: 6px; height: 6px; border-left: 1.4px solid #555; border-top: 1.4px solid #555; transform: rotate(45deg) translate(1px, 1px); }
    .ritem { display: flex; align-items: center; height: 18.6px; gap: 1px; margin-left: 1px; white-space: nowrap; }

    .status { height: 12px; flex: none; display: flex; align-items: center; background: #f5f5f5; border-top: 1px solid #dcdcdc; position: relative; color: #333; }
    .status .a { margin-left: 1px; flex: 1; }
    .status .c { white-space: nowrap; }
    .status .cell { height: 12px; }
    .status .dd { width: 8px; }
    .taskbar { height: 27px; flex: none; display: flex; align-items: center; background: #0e1114; color: #ddd; }
    .tk { width: 32px; height: 27px; display: flex; align-items: center; justify-content: center; flex: none; }
    .tk.ie-t { margin-left: 2px; }
    .tk.act { margin-left: 1px; background: #2e3236; border-bottom: 2px solid #7aa9c9; }
    .sw { width: 16px; height: 17px; background: #b8232a; color: #fff; font: 700 6px/1 'Liberation Sans', sans-serif; text-align: center; padding-top: 2px; }
    .sw small { display: block; font-size: 5px; color: #ddd; margin-top: 1px; }
    .ie { font: italic 700 21px/1 'Liberation Sans', sans-serif; color: #2f9fe0; text-shadow: 0 0 1px #e3b629; }
    .tray { margin-left: auto; display: flex; align-items: center; color: #dcdcdc; }
    .clock { text-align: center; line-height: 12px; width: 40px; margin: 0 11px 0 6px; }
    .rus { margin: 0 0 0 7px; }
  `;

  private strip(items: (StripItem | number)[]) {
    return items.map((it) => {
      if (typeof it === 'number') return html`<div class="hline" style="height:${it}px"></div>`;
      const raw = it[0];
      const off = raw.endsWith('!'), on = raw.endsWith('*');
      const name = off || on ? raw.slice(0, -1) : raw;
      return html`<div class="si ${on ? 'on' : ''}">${ic(name, 15, off ? 'off' : '')}${it[1] ? html`<i class="dd"></i>` : ''}</div>`;
    });
  }

  override render() {
    return html`<div class="app">
      <div class="title">
        <div class="logo"><span class="ds">3DS</span><b>SOLID</b><span>WORKS</span></div>
        <div class="menu">${MENU.map((m) => html`<span>${m}</span>`)}</div>
        ${ic('pin', 12)}
        <div class="title-tools">
          ${bar('|6 home newdoc v8 open v8 save v8 print v8 undo v7')}
          <div class="select"><span class="cell">${ic('arrow')}</span><i class="dd"></i></div>
          ${bar('light listico cog v')}
        </div>
        <div class="doc">T2M-00.00.00-Прицеп одноосный 2м</div>
        <div class="search">
          ${ic('shieldS', 12)}<span class="q">Поиск в базе знаний</span>${ic('search', 14)}<i class="dd" style="width:8px"></i>
        </div>
        <div class="win">
          ${ic('user', 15)}<span class="help">?</span><i class="dd" style="width:8px"></i><span class="cell">${ic('minD', 12)}</span><span class="cell">${ic('restD', 12)}</span><span class="cell">${ic('closeD', 12)}</span>
        </div>
      </div>

      <div class="tb r1">
        <div class="group g1">${bar('h8 normal |6 cubeE wire1 wire2 wire3 wire2 wire3 _1 cube* cube cube2 |5 flash!')}</div>
        <div class="group g2">${bar('h11 planeB axis triad dot diamond spark cyls')}</div>
      </div>
      <div class="tb r2">
        <div class="group">${bar(`h9 abc probe scale docs gauge hand! shieldok shield! sigma dims! book freeze! docq curve v _1 tablex |9 color layers check! redsq sprock h15 insert v11 clip pattern v9 fast move v |5 show |6 elem v geom v |5 motion |6 bom |5 expl expl! |6 load ibeam ycube ybcube lightB |5 inst* h13 gears2 curve nodes ball rollers gearB pipe redcube screw bolts kit rings pcirc redgear`)}</div>
      </div>

      <div class="ribbon">
        ${RIBBON.map((r) => html`<div class="rib ${r.sep ? 'sep' : ''} ${r.off ? 'off' : ''} ${r.sel ? 'sel' : ''}" style="width:${r.w}px">
          <div style="height:18px;margin-top:${r.cy - 74}px">${ic(r.i, 18, r.off ? 'off' : '')}</div>
          <div style="margin-top:${r.y - 4.5 - (r.cy + 9)}px">${r.t.map((l) => html`<div>${l}</div>`)}</div>
          ${r.dd ? html`<i class="dd"></i>` : ''}
        </div>`)}
      </div>

      <div class="work">
        <div class="center">
          <div class="tabsrow">
            ${TABS.map((t, i) => html`<div class="tab ${i === 0 ? 'on' : ''}" style="width:${TAB_W[i]}px">${t}</div>`)}
            <div class="hud">${bar('search zoomA prevV sect dyn viewO v cubeV v eye v wheelP wheelF v monitor v')}</div>
            <div class="vwin">${bar('mini1 mini2 minim rest close')}</div>
          </div>
          <div class="body">
            <div class="left">
              <div class="strip s1">${this.strip(STRIP1)}</div>
              <div class="strip s2">${this.strip(STRIP2)}</div>
            </div>
            <div class="mid">
              <div class="midrow">
                <div class="fm">
                  <div class="fm-head"></div>
                  <div class="fmtabs">
                    <span class="t on">${ic('asm')}</span><span class="t">${ic('fm2')}</span><span class="t">${ic('fm3')}</span><span class="t">${ic('fm4')}</span><span class="t">${ic('wheel')}</span>
                    <span class="nav first">◂</span><span class="nav">▸</span>
                  </div>
                  <div class="filter">${ic('filter', 14)}<i class="dd"></i></div>
                  <div class="tree">
                    ${TREE.map(([i, t, a]) => html`<div class="row ${a === 2 ? 'root' : ''}"><i class="ar ${a === 1 ? 'x' : ''}"></i>${ic(i, 14)}<span>${t}</span></div>`)}
                    <div class="vs"><span>˄</span><div class="th"></div><span class="dn">˅</span></div>
                  </div>
                  <div class="hs"><span>‹</span><div class="th"></div><span>›</span></div>
                </div>
                <div class="view">
                  ${trailer}
                  <div class="tip">Базовая кромка1 от T2M-00.03.13-Фанера&lt;1&gt;</div>
                  <svg class="triad" width="44" height="44" viewBox="0 0 44 44">
                    <path d="M21 24V8" stroke="#1c7a2c" stroke-width="2.4"/><path d="M18 12 21 5 24 12Z" fill="#1c7a2c"/>
                    <path d="M21 24 34 31" stroke="#b0201c" stroke-width="2.4"/><path d="M31 27 37 33 29 33Z" fill="#b0201c"/>
                    <path d="M21 24 9 31" stroke="#1f3fb8" stroke-width="2.4"/><path d="M12 27 5 33 14 33Z" fill="#1f3fb8"/>
                    <text x="18.5" y="5" font-size="7" fill="#2c9c3f" font-family="Liberation Sans">Y</text>
                    <text x="36" y="36" font-size="7" fill="#d0302a" font-family="Liberation Sans">X</text>
                    <text x="1" y="37" font-size="7" fill="#2f4fd0" font-family="Liberation Sans">Z</text>
                  </svg>
                  <div class="iso">*Изометрия</div>
                  <div class="grab"></div>
                  <div class="tpt">
                    <span class="on">${ic('home', 13)}</span><span>${ic('tabBox', 13)}</span><span>${ic('tabOpen', 13)}</span><span>${ic('tabPic', 13)}</span><span>${ic('wheel', 13)}</span><span>${ic('fm2', 13)}</span><span>${ic('tabChat', 13)}</span>
                  </div>
                </div>
              </div>
              <div class="bottom">
                <div class="nav4"><i></i><i></i><i></i><i></i></div>
                <div class="btab on" style="width:45px">Модель</div>
                <div class="btab" style="width:84px">Трехмерные виды</div>
                <div class="btab" style="width:61px">Анимация1</div>
              </div>
            </div>
          </div>
        </div>

        <div class="pane">
          <div class="phead"><span class="l">«</span>Ресурсы SOLIDWORKS<span class="r"><span class="cell" style="height:14px">${ic('cog', 13)}</span><span class="cell" style="height:14px;width:14px">${ic('pinB', 12)}</span></span></div>
          <div class="pbody">
            <div class="welcome">${ic('home', 14)}<span>Добро пожаловать в SOLIDWORKS</span></div>
            ${SECTIONS.map((s) => html`<div class="section" style="margin-top:${s.gap}px">
              <div class="shead"><span>${s.title}</span><i class="chev"></i></div>
              ${s.items.map(([i, t]) => html`<div class="ritem">${ic(i, 14)}<span>${t}</span></div>`)}
            </div>`)}
          </div>
        </div>
      </div>

      <div class="status">
        <span class="a">SOLIDWORKS Premium 2019 SP2.0</span>
        <span class="c" style="width:85px">Недоопределенный</span>
        <span class="c" style="width:118px">Редактируется Сборка</span>
        <span class="c" style="width:49px">Настройка</span><i class="dd" style="height:12px"></i>
        <span style="width:37px"></span><span class="cell">${ic('gears2', 12)}</span>
      </div>

      <div class="taskbar">
        <div class="tk"><svg width="14" height="14" viewBox="0 0 14 14"><path d="M0 2 6 1V6.5H0ZM7 .8 14 0V6.5H7ZM0 7.5H6V13L0 12ZM7 7.5H14V14L7 13.2Z" fill="#fff"/></svg></div>
        <div class="tk"><svg width="14" height="14" viewBox="0 0 14 14"><circle cx="8.5" cy="5.5" r="4" fill="none" stroke="#eee" stroke-width="1.2"/><path d="M5.5 8.5 1 13" stroke="#eee" stroke-width="1.3"/></svg></div>
        <div class="tk"><svg width="15" height="11" viewBox="0 0 15 11"><path d="M3 .5H12V10.5H3ZM1 2.5V8.5M14 2.5V8.5" fill="none" stroke="#eee"/></svg></div>
        <div class="tk ie-t"><span class="ie">e</span></div>
        <div class="tk"><svg width="16" height="14" viewBox="0 0 16 14"><path d="M0 1H6L7 3H16V14H0Z" fill="#e8c15a"/><rect x="5" y="7" width="6" height="5" fill="#3d9ad1"/></svg></div>
        <div class="tk act"><div class="sw">S W<small>2019</small></div></div>
        <div class="tray">
          <svg width="14" height="10" viewBox="0 0 14 10"><path d="M2 8 7 3 12 8" fill="none" stroke="#ddd" stroke-width="1.2"/></svg>
          <span style="width:3px"></span>
          <svg width="14" height="12" viewBox="0 0 14 12"><path d="M2 1H12V8H2ZM5 11H9M7 8V11" fill="none" stroke="#ddd"/></svg>
          <span style="width:2px"></span>
          <svg width="13" height="12" viewBox="0 0 13 12"><path d="M1 4H3L6 1V11L3 8H1ZM8 4C9 5 9 7 8 8M10 2.5C12 4.5 12 7.5 10 9.5" fill="none" stroke="#ddd"/></svg>
          <span class="rus">РУС</span>
          <div class="clock">12:15<br />07.07.2025</div>
          <svg width="13" height="12" viewBox="0 0 13 12"><path d="M1 1H12V9H8L6.5 11 5 9H1Z" fill="none" stroke="#ddd"/></svg>
          <span style="width:14px"></span>
        </div>
      </div>
    </div>`;
  }
}
